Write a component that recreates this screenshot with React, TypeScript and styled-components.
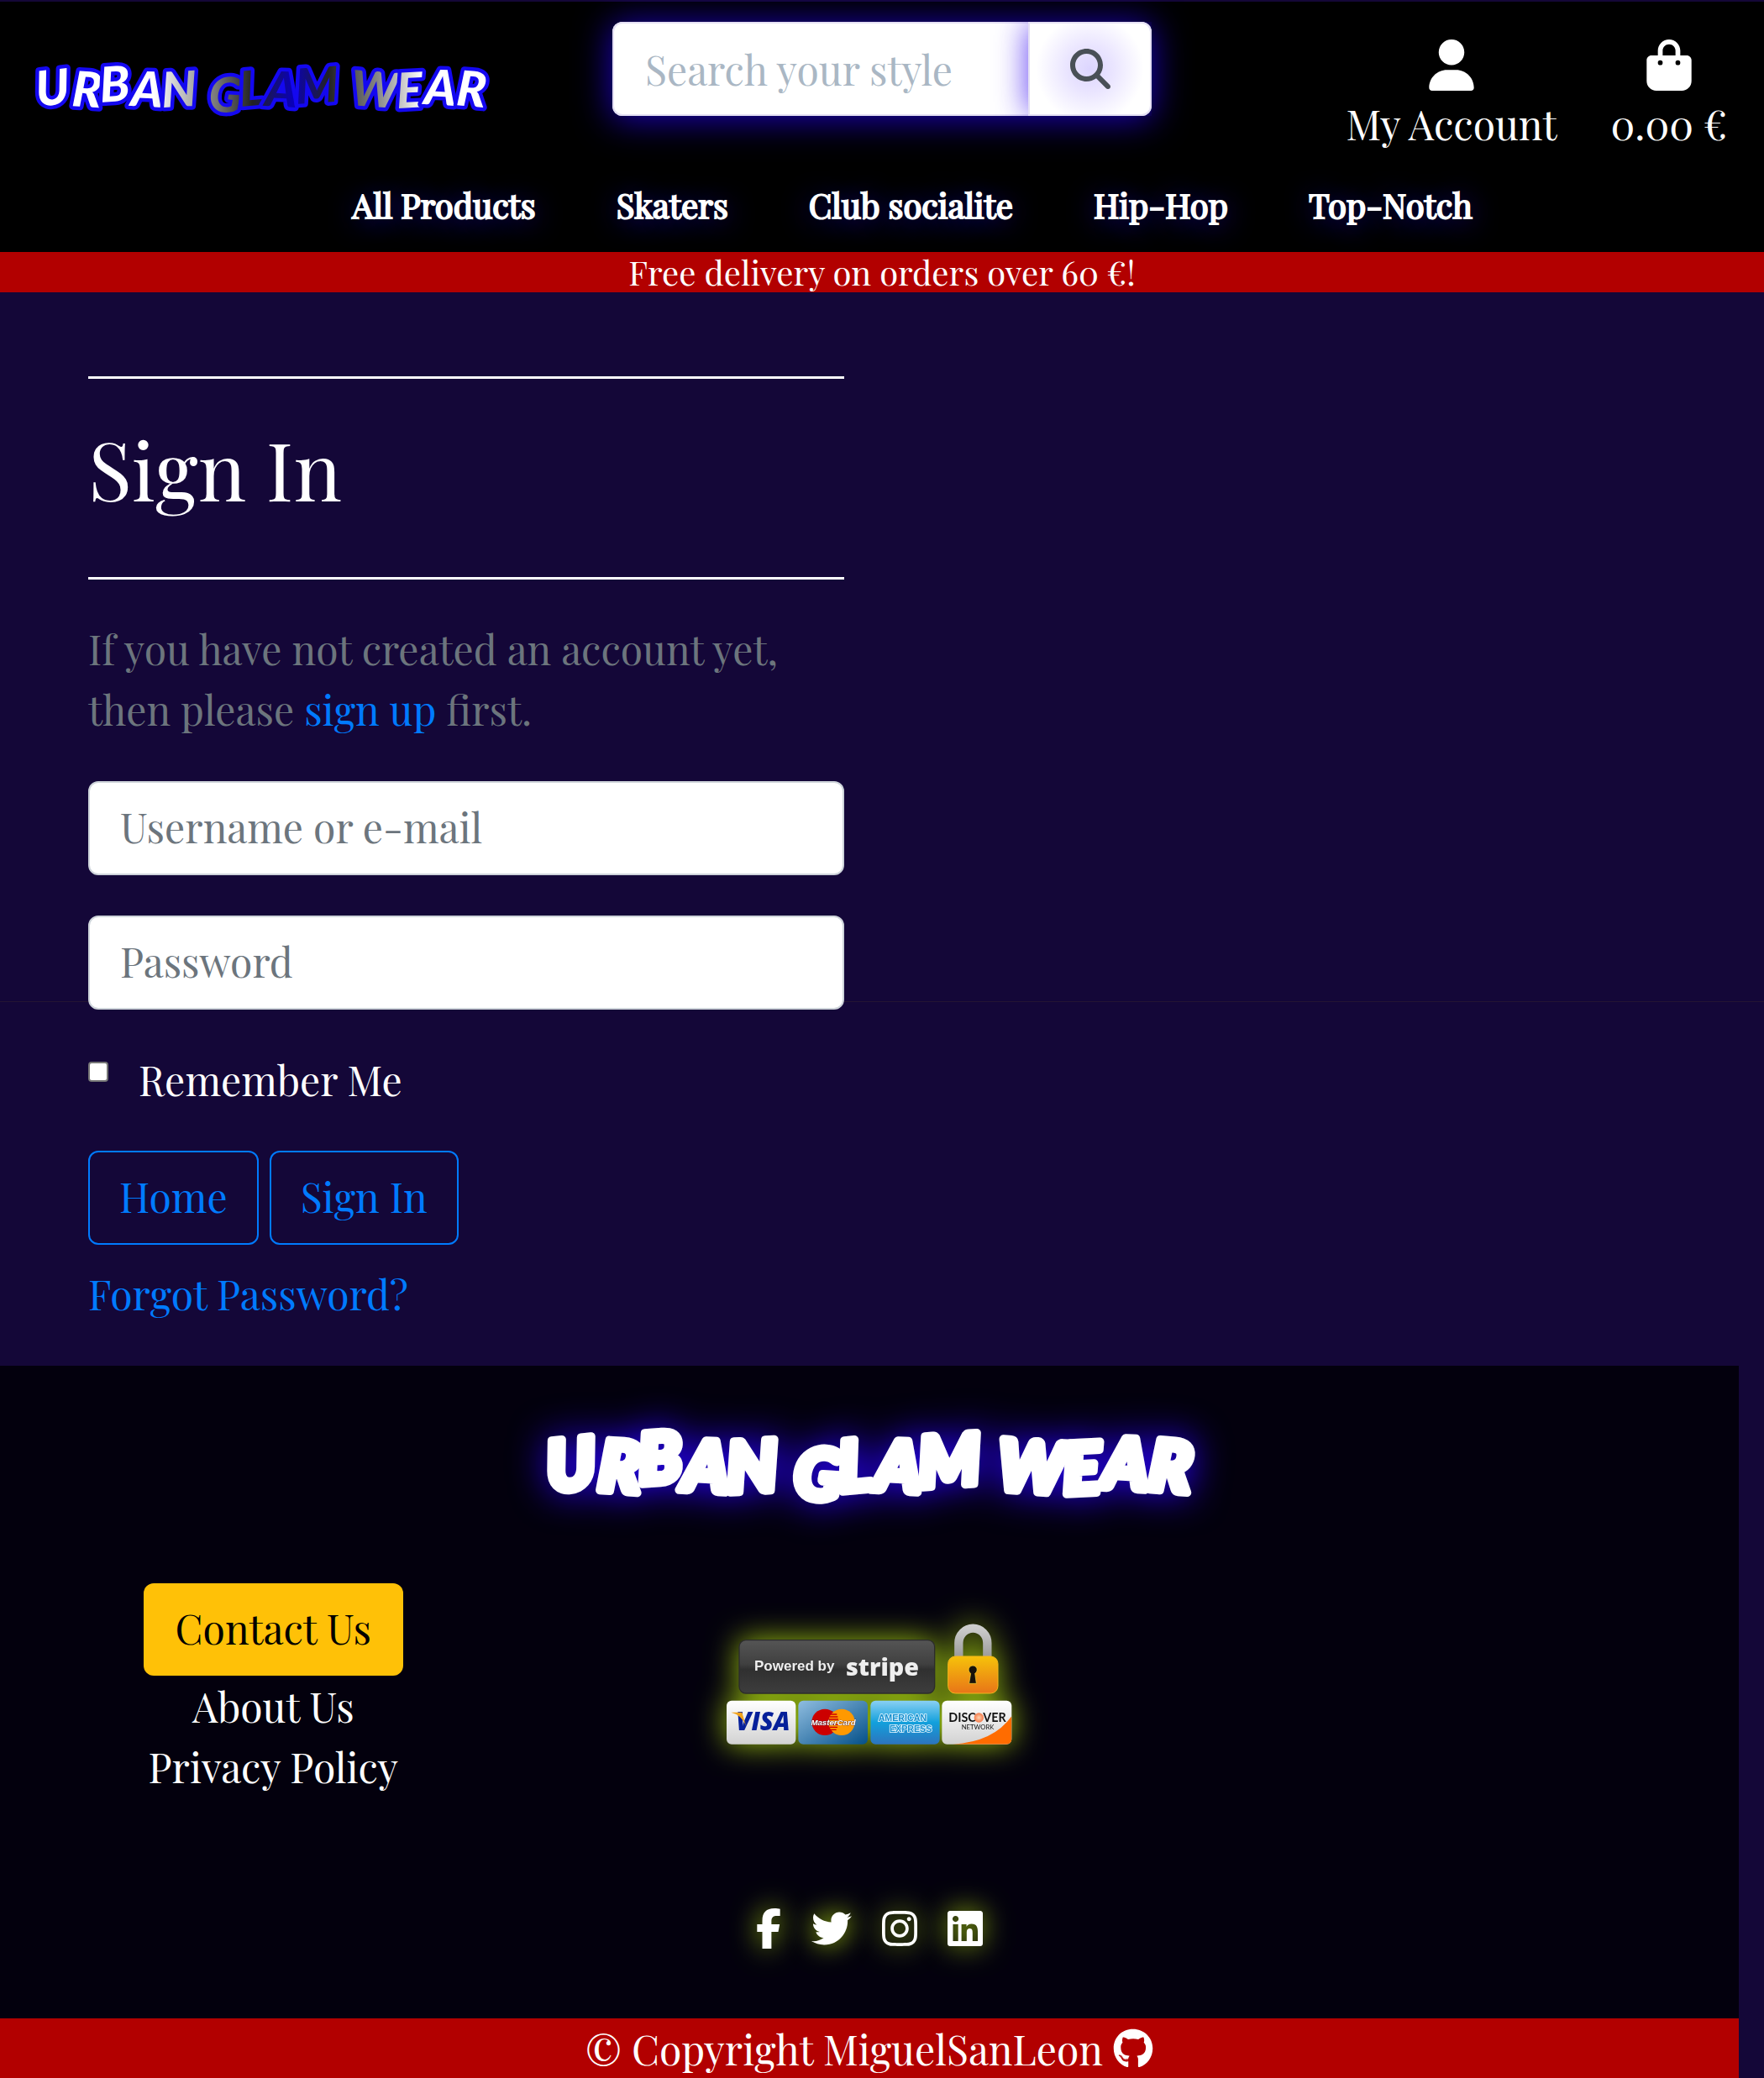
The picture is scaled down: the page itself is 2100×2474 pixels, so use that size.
import React from "react";
import styled, { createGlobalStyle } from "styled-components";
import {
  FaUser, FaBagShopping, FaMagnifyingGlass,
  FaFacebookF, FaTwitter, FaInstagram, FaLinkedin, FaGithub,
} from "react-icons/fa6";

const serif = `"Playfair Display", "Liberation Serif", serif`;

const GlobalStyle = createGlobalStyle`
  *, *::before, *::after { box-sizing: border-box; }
  body {
    margin: 0;
    background: #140738 linear-gradient(transparent 1192px, #241533 1192px 1193px, transparent 1193px) no-repeat;
    color: #fff;
    font: 48px/72px ${serif};
  }
  a { text-decoration: none; }
  h1, p { margin: 0; font-weight: 400; }
  input, button { font: inherit; }
`;

const Header = styled.header`
  margin-top: 2px;
  background: #000;
  padding-bottom: 26px;
`;

const TopRow = styled.div`
  display: grid;
  grid-template-columns: repeat(3, minmax(0, 1fr));
  align-items: start;
  height: 212px;
`;

const Brand = styled.a`
  display: block;
  padding: 58px 0 0 44px;
  line-height: 0;
`;

const SearchForm = styled.form`
  display: flex;
  margin: 24px 29px 0;
  height: 112px;
  border-radius: 12px;
  background: #fff;
  box-shadow: 0 3px 42px 2px #1a00b4;
`;

const SearchInput = styled.input`
  flex: 1;
  min-width: 0;
  padding: 17px 37px;
  border: 2px solid #e4e0f4;
  border-right: 0;
  border-radius: 12px 0 0 12px;
  outline: 0;
  background: #fff;
  &::placeholder { color: #aab7c4; opacity: 1; }
`;

const SearchButton = styled.button`
  width: 147px;
  display: grid;
  place-items: center;
  border: 2px solid #e4e0f4;
  border-radius: 0 12px 12px 0;
  background: radial-gradient(circle at 50% 50%, #dcd5ff 0, #eae5ff 28px, #fff 64px);
  color: #495057;
  box-shadow: -6px 0 36px -4px rgba(60, 20, 240, 0.75);
  clip-path: inset(0 0 0 -60px);
  svg { width: 48px; height: 48px; }
`;

const UserLinks = styled.div`
  display: flex;
  justify-content: flex-end;
  gap: 64px;
  padding: 45px 44px 0 0;
`;

const UserLink = styled.a`
  display: flex;
  flex-direction: column;
  align-items: center;
  gap: 3px;
  color: #fff;
  white-space: nowrap;
  svg { height: 61px; width: 54px; }
`;

const Nav = styled.nav`
  display: flex;
  justify-content: center;
  gap: 96px;
  padding-left: 72px;
`;

const NavLink = styled.a`
  color: #fff;
  font-size: 40px;
  line-height: 60px;
  -webkit-text-stroke: 2px #fff;
  text-shadow: 0 4px 32px #2800dc;
`;

const Banner = styled.p`
  background: #b20000;
  text-align: center;
  font-size: 40px;
  line-height: 48px;
`;

const Main = styled.main`
  width: 50%;
  padding: 100px 45px 48px 105px;
`;

const Rule = styled.hr`
  margin: 0;
  border: 0;
  height: 3px;
  background: #fff;
`;

const Title = styled.h1`
  margin: 48px 0 72px;
  font-size: 96px;
  line-height: 116px;
`;

const Intro = styled.p`
  margin: 46px 0 50px;
  color: #6c757d;
`;

const TextLink = styled.a`
  color: #007bff;
`;

const LoginForm = styled.form`
  display: flex;
  flex-direction: column;
  gap: 48px;
`;

const Field = styled.input`
  width: 100%;
  height: 112px;
  padding: 16px 36px 20px;
  border: 2px solid #ced4da;
  border-radius: 12px;
  background: #fff;
  &::placeholder { color: #6c757d; opacity: 1; }
`;

const Remember = styled.div`
  display: flex;
  align-items: flex-start;
  gap: 36px;
  height: 72px;
  line-height: 70px;
`;

const Checkbox = styled.input`
  appearance: none;
  width: 24px;
  height: 24px;
  margin: 14px 0 0;
  border: 2px solid #767676;
  border-radius: 4px;
  background: #fff;
`;

const Actions = styled.div`
  display: flex;
  gap: 13px;
`;

const outline = `
  height: 112px;
  padding: 16px 35px 20px;
  border: 2px solid #007bff;
  border-radius: 12px;
  background: transparent;
  color: #007bff;
`;
const OutlineLink = styled.a`${outline}`;
const OutlineButton = styled.button`${outline}`;

const Forgot = styled(TextLink)`
  display: block;
  margin: -26px 0 2px;
`;

const Footer = styled.footer`
  margin-right: 30px;
  background: #03000d;
`;

const FooterLogo = styled.div`
  display: flex;
  justify-content: center;
  padding: 60px 0 79px;
  svg { filter: drop-shadow(0 0 22px #2600f0); }
`;

const FooterGrid = styled.div`
  display: grid;
  grid-template-columns: 22fr 26fr 22fr;
`;

const FooterLinks = styled.div`
  display: flex;
  flex-direction: column;
  align-items: center;
`;

const FooterLink = styled.a`
  color: #fff;
`;

const ContactLink = styled.a`
  height: 110px;
  padding: 17px 38px;
  border-radius: 12px;
  background: #ffc107;
  color: #000;
`;

const Payments = styled.div`
  display: flex;
  justify-content: center;
  padding-top: 48px;
  svg { filter: drop-shadow(0 0 18px #9bc00f); }
`;

const Social = styled.div`
  display: flex;
  justify-content: center;
  gap: 36px;
  padding: 133px 0 83px;
`;

const SocialLink = styled.a<{ $width: number }>`
  display: block;
  height: 48px;
  color: #fff;
  filter: drop-shadow(0 0 16px #9bc00f);
  svg { display: block; height: 48px; width: ${(p) => p.$width}px; }
`;

const Copyright = styled.div`
  display: flex;
  align-items: center;
  justify-content: center;
  gap: 12px;
  height: 71px;
  line-height: 70px;
  background: #b20000;
  a { display: flex; color: #fff; }
  svg { height: 48px; width: 48px; }
`;

const wordmark = {
  fontFamily: `Lato, "Liberation Sans", sans-serif`,
  fontWeight: 900,
  fontStyle: "italic",
} as const;

const tilt = "-6 4 -4 3 -3 0 4 -5 3 -4 0 4 -3 3 5";

function HeaderLogo() {
  return (
    <svg width="534" height="88" viewBox="0 0 534 88" overflow="visible" role="img" aria-label="Urban Glam Wear">
      <defs>
        <linearGradient id="chrome" gradientUnits="userSpaceOnUse" x1="0" y1="0" x2="534" y2="0">
          <stop offset="0" stopColor="#fff" />
          <stop offset=".26" stopColor="#fff" />
          <stop offset=".4" stopColor="#777" />
          <stop offset=".48" stopColor="#222" />
          <stop offset=".57" stopColor="#0a00b8" />
          <stop offset=".65" stopColor="#222" />
          <stop offset=".76" stopColor="#888" />
          <stop offset=".86" stopColor="#fff" />
          <stop offset="1" stopColor="#fff" />
        </linearGradient>
      </defs>
      <text x="267" y="67" dy="0 -1 -4 4 2 0 4 -5 -1 -2 0 1 4 -5 1" textAnchor="middle" fontSize="58" rotate={tilt}
        style={wordmark} fill="url(#chrome)" stroke="#1408f0" strokeWidth="9" strokeLinejoin="round" paintOrder="stroke">
        URBAN GLAM WEAR
      </text>
    </svg>
  );
}

function FooterWordmark() {
  return (
    <svg width="800" height="120" viewBox="0 0 800 120" overflow="visible" role="img" aria-label="Urban Glam Wear">
      <text x="400" y="90" dy="0 -2 -7 7 3 0 6 -7 -2 -3 0 2 6 -8 2" textAnchor="middle" fontSize="83" rotate={tilt}
        style={wordmark} fill="#fff" stroke="#fff" strokeWidth="10" strokeLinejoin="round">
        URBAN GLAM WEAR
      </text>
    </svg>
  );
}

function PaymentBadge() {
  const sans = `"Liberation Sans", sans-serif`;
  return (
    <svg width="340" height="144" viewBox="137 97 1020 432" overflow="visible" role="img" aria-label="Powered by Stripe">
      <defs>
        <linearGradient id="plate" x2="0" y2="1">
          <stop offset="0" stopColor="#555" /><stop offset=".45" stopColor="#404040" />
          <stop offset=".55" stopColor="#303030" /><stop offset="1" stopColor="#3d3d3d" />
        </linearGradient>
        <linearGradient id="gold" x2="0" y2="1"><stop offset="0" stopColor="#f6c20a" /><stop offset="1" stopColor="#e87518" /></linearGradient>
        <linearGradient id="steel" x2="0" y2="1"><stop offset="0" stopColor="#ccc" /><stop offset="1" stopColor="#999" /></linearGradient>
        <linearGradient id="paper" x2="0" y2="1"><stop offset="0" stopColor="#fff" /><stop offset="1" stopColor="#d2d2d2" /></linearGradient>
        <linearGradient id="master" x2="1" y2="1"><stop offset="0" stopColor="#8fbde0" /><stop offset="1" stopColor="#045089" /></linearGradient>
        <linearGradient id="amex" x2="0" y2="1"><stop offset="0" stopColor="#8ad0f3" /><stop offset=".5" stopColor="#12a0dc" /><stop offset="1" stopColor="#2d74bd" /></linearGradient>
        <radialGradient id="sun"><stop offset="0" stopColor="#ffd3b0" /><stop offset="1" stopColor="#f47a4a" /></radialGradient>
        <clipPath id="disc"><rect x="906" y="372" width="249" height="156" rx="18" /></clipPath>
      </defs>
      <rect x="182" y="156" width="698" height="190" rx="24" fill="url(#plate)" stroke="#2c2c2c" strokeWidth="4" />
      <text x="236" y="264" fontFamily={sans} fontWeight="700" fontSize="51" fill="#eee">Powered by</text>
      <text x="563" y="282" fontFamily={`"Open Sans", sans-serif`} fontWeight="800" fontSize="86" fill="#eee">stripe</text>
      <path d="M966 220v-54a51 52 0 0 1 102 0v54" fill="none" stroke="url(#steel)" strokeWidth="31" />
      <rect x="928" y="214" width="178" height="132" rx="26" fill="url(#gold)" stroke="#f4b61c" strokeWidth="3" />
      <path d="M1009 275a15 15 0 1 1 15 0l5 36h-26z" fill="#17110a" stroke="#f4d33a" strokeWidth="2" />
      <rect x="137" y="372" width="247" height="156" rx="18" fill="url(#paper)" />
      <text x="171" y="478" fontFamily={`"Open Sans", sans-serif`} fontWeight="800" fontStyle="italic" fontSize="88" fill="#06209a">VISA</text>
      <path d="M153 414h39l14 48q-15-39-53-48z" fill="#f2a31c" />
      <rect x="393" y="372" width="248" height="156" rx="18" fill="url(#master)" />
      <circle cx="488" cy="449" r="47" fill="#cc0000" />
      <circle cx="548" cy="449" r="47" fill="#ff9900" />
      <path d="M508 421h23M504 430h30M503 439h33M504 458h32M505 467h28M509 476h20" stroke="#cc0000" strokeWidth="4" />
      <text x="518" y="460" textAnchor="middle" fontFamily={sans} fontStyle="italic" fontWeight="700" fontSize="29" fill="#fff" stroke="#423" strokeWidth="2" paintOrder="stroke">MasterCard</text>
      <rect x="651" y="372" width="247" height="156" rx="18" fill="url(#amex)" />
      <g fontFamily={sans} fontWeight="700" fontSize="32" fill="#168fce" stroke="#e7f7ff" strokeWidth="5" paintOrder="stroke">
        <text x="679" y="446">AMERICAN</text>
        <text x="719" y="485">EXPRESS</text>
      </g>
      <rect x="906" y="372" width="249" height="156" rx="18" fill="url(#paper)" />
      <path d="M1155 428Q1090 520 945 528h210z" fill="#ff6c00" clipPath="url(#disc)" />
      <g fill="#111" fontFamily={`Lato, sans-serif`}>
        <text x="930" y="447" fontSize="43" fontWeight="700">DISC</text>
        <text x="1053" y="447" fontSize="43" fontWeight="700">VER</text>
        <text x="976" y="476" fontSize="23">NETWORK</text>
      </g>
      <circle cx="1038" cy="433" r="17" fill="url(#sun)" />
    </svg>
  );
}

const categories = ["All Products", "Skaters", "Club socialite", "Hip-Hop", "Top-Notch"];

const socials = [
  { label: "Facebook", width: 30, icon: <FaFacebookF /> },
  { label: "Twitter", width: 48, icon: <FaTwitter /> },
  { label: "Instagram", width: 42, icon: <FaInstagram /> },
  { label: "LinkedIn", width: 42, icon: <FaLinkedin /> },
];

export default function App() {
  const stay = (e: React.FormEvent) => e.preventDefault();
  return (
    <>
      <GlobalStyle />
      <Header>
        <TopRow>
          <Brand href="#"><HeaderLogo /></Brand>
          <SearchForm role="search" onSubmit={stay}>
            <SearchInput type="text" placeholder="Search your style" aria-label="Search your style" />
            <SearchButton type="submit" aria-label="Search"><FaMagnifyingGlass /></SearchButton>
          </SearchForm>
          <UserLinks>
            <UserLink href="#"><FaUser />My Account</UserLink>
            <UserLink href="#"><FaBagShopping />0.00 €</UserLink>
          </UserLinks>
        </TopRow>
        <Nav>
          {categories.map((name) => <NavLink href="#" key={name}>{name}</NavLink>)}
        </Nav>
      </Header>
      <Banner>Free delivery on orders over 60 €!</Banner>

      <Main>
        <Rule />
        <Title>Sign In</Title>
        <Rule />
        <Intro>
          If you have not created an account yet, then please <TextLink href="#">sign up</TextLink> first.
        </Intro>
        <LoginForm onSubmit={stay}>
          <Field type="text" placeholder="Username or e-mail" aria-label="Username or e-mail" />
          <Field type="password" placeholder="Password" aria-label="Password" />
          <Remember>
            <Checkbox type="checkbox" id="remember" />
            <label htmlFor="remember">Remember Me</label>
          </Remember>
          <Actions>
            <OutlineLink href="#">Home</OutlineLink>
            <OutlineButton type="submit">Sign In</OutlineButton>
          </Actions>
          <Forgot href="#">Forgot Password?</Forgot>
        </LoginForm>
      </Main>

      <Footer>
        <FooterLogo><FooterWordmark /></FooterLogo>
        <FooterGrid>
          <FooterLinks>
            <ContactLink href="#">Contact Us</ContactLink>
            <FooterLink href="#">About Us</FooterLink>
            <FooterLink href="#">Privacy Policy</FooterLink>
          </FooterLinks>
          <Payments><PaymentBadge /></Payments>
        </FooterGrid>
        <Social>
          {socials.map(({ label, width, icon }) => (
            <SocialLink href="#" key={label} aria-label={label} $width={width}>{icon}</SocialLink>
          ))}
        </Social>
        <Copyright>
          <span>© Copyright MiguelSanLeon</span>
          <a href="#" aria-label="GitHub"><FaGithub /></a>
        </Copyright>
      </Footer>
    </>
  );
}
